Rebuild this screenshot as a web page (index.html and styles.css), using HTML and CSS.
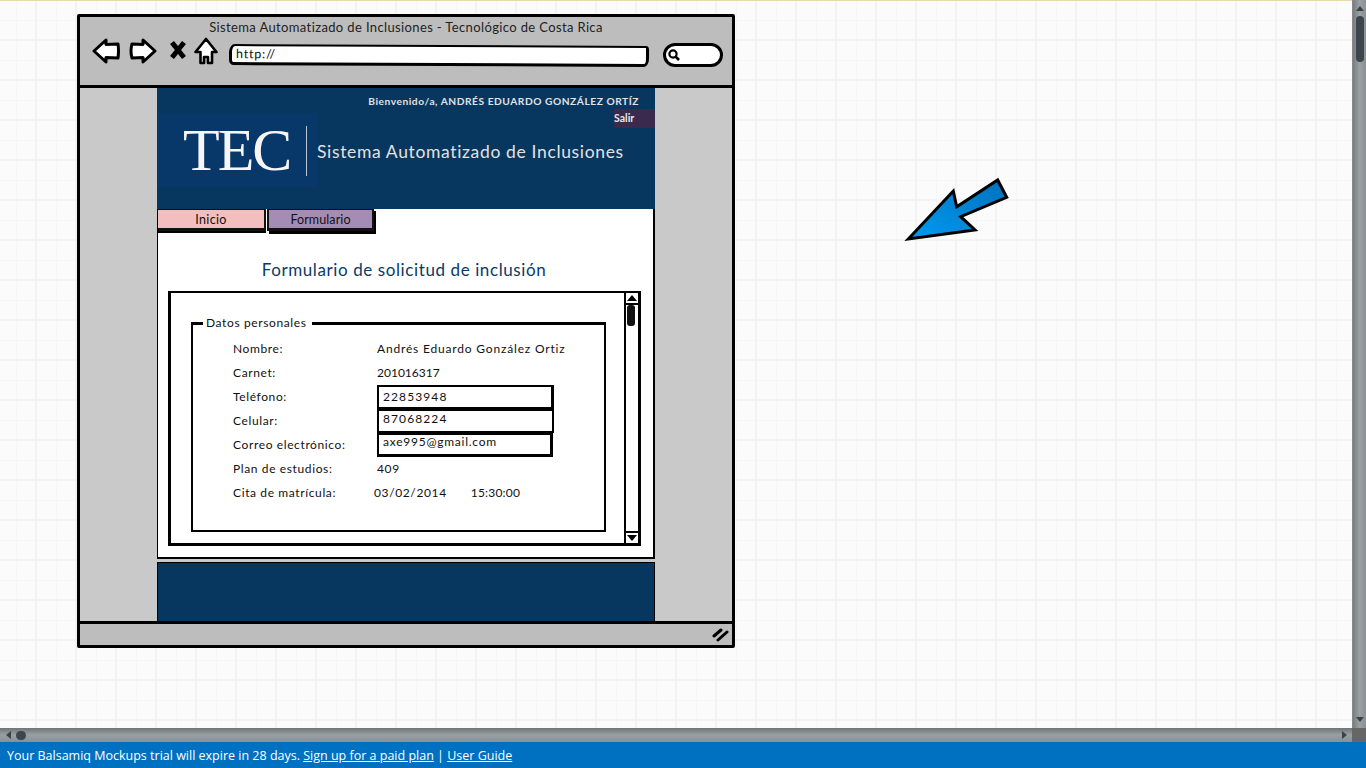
FILE: index.html
```html
<!DOCTYPE html>
<html lang="es">
<head>
<meta charset="utf-8">
<title>Sistema Automatizado de Inclusiones</title>
<link rel="stylesheet" href="styles.css">
</head>
<body>
<div class="app">
  <div class="workspace">
    <main class="canvas">
      <section class="window">
        <header class="chrome">
          <div class="chrome-title">Sistema Automatizado de Inclusiones - Tecnológico de Costa Rica</div>
          <div class="chrome-tools">
            <svg class="tool tool-back" viewBox="0 0 28 26"><path d="M14 2 L2 13 L14 24 L14 19.5 L26 20 Q27 13 26 6 L14 6.5 Z" fill="#fff" stroke="#000" stroke-width="3" stroke-linejoin="round"/></svg>
            <svg class="tool tool-fwd" viewBox="0 0 28 26"><path d="M14 2 L26 13 L14 24 L14 19.5 L3 20 Q1 13 3 6 L14 6.5 Z" fill="#fff" stroke="#000" stroke-width="3" stroke-linejoin="round"/></svg>
            <svg class="tool tool-x" viewBox="0 0 18 20"><path d="M3 2.5 L15 17.5 M15 2.5 L3 17.5" fill="none" stroke="#000" stroke-width="5"/></svg>
            <svg class="tool tool-home" viewBox="0 0 24 28"><path d="M12 2 L22.5 15 L18 15 L18 26 L14 26 L14 20 L10 20 L10 26 L6.5 26 L6.5 15 L1.5 15 Z" fill="#fff" stroke="#000" stroke-width="2.6" stroke-linejoin="round"/></svg>
            <div class="url">http://</div>
            <div class="search"><svg class="search-glass" viewBox="0 0 12 12"><circle cx="5" cy="5" r="3.6" fill="none" stroke="#000" stroke-width="2.2"/><path d="M7.5 7.5 L11 11" stroke="#000" stroke-width="2.6"/></svg></div>
          </div>
        </header>
        <div class="viewport">
          <div class="gutter"></div>
          <div class="site">
            <div class="site-header">
              <div class="welcome">Bienvenido/a, ANDRÉS EDUARDO GONZÁLEZ ORTÍZ</div>
              <div class="logout-row"><span class="logout">Salir</span></div>
              <div class="brand">
                <div class="logo"><span class="logo-text">TEC</span><span class="logo-rule"></span></div>
                <div class="brand-name">Sistema Automatizado de Inclusiones</div>
              </div>
            </div>
            <div class="site-main">
              <nav class="tabs">
                <span class="tab tab-home">Inicio</span>
                <span class="tab tab-form">Formulario</span>
              </nav>
              <h1 class="form-title">Formulario de solicitud de inclusión</h1>
              <div class="scrollbox">
                <div class="scroll-content">
                  <fieldset class="personal">
                    <legend class="personal-legend">Datos personales</legend>
                    <div class="rows">
                      <div class="label">Nombre:</div><div class="value value-name">Andrés Eduardo González Ortiz</div>
                      <div class="label">Carnet:</div><div class="value value-id">201016317</div>
                      <div class="label">Teléfono:</div><div class="input input-a">22853948</div>
                      <div class="label">Celular:</div><div class="input input-b">87068224</div>
                      <div class="label">Correo electrónico:</div><div class="input input-c">axe995@gmail.com</div>
                      <div class="label">Plan de estudios:</div><div class="value">409</div>
                      <div class="label">Cita de matrícula:</div><div class="value value-date"><span>03/02/2014</span><span class="value-time">15:30:00</span></div>
                    </div>
                  </fieldset>
                </div>
                <div class="mini-scroll">
                  <div class="mini-btn"><span class="tri-up"></span></div>
                  <div class="mini-track"><div class="mini-thumb"></div></div>
                  <div class="mini-btn"><span class="tri-down"></span></div>
                </div>
              </div>
            </div>
            <div class="site-footer"></div>
          </div>
          <div class="gutter"></div>
        </div>
        <footer class="status">
          <svg class="grip" viewBox="0 0 18 14"><path d="M2 8 L9 2 M6 12 L15 4" fill="none" stroke="#000" stroke-width="3" stroke-linecap="round"/></svg>
        </footer>
      </section>
      <svg class="pointer" viewBox="0 0 110 70">
        <defs><linearGradient id="pg" x1="0" y1="1" x2="1" y2="0"><stop offset="0" stop-color="#009bf2"/><stop offset="1" stop-color="#0071bb"/></linearGradient></defs>
        <path d="M6.3 62 L51.3 14 L54.7 29.7 L95.7 3 L104.7 20.3 L58.7 39.7 L73 53 Z" fill="url(#pg)" stroke="#000" stroke-width="3" stroke-miterlimit="10"/>
      </svg>
    </main>
    <div class="vbar">
      <span class="sb-tri-up"></span>
      <div class="vthumb"></div>
      <span class="sb-tri-down"></span>
    </div>
    <div class="hbar">
      <span class="sb-tri-left"></span>
      <div class="hthumb"></div>
      <span class="sb-tri-right"></span>
    </div>
    <div class="corner"></div>
  </div>
  <div class="trial">Your Balsamiq Mockups trial will expire in 28 days. <a class="trial-link" href="#">Sign up for a paid plan</a> | <a class="trial-link" href="#">User Guide</a></div>
</div>
</body>
</html>
```
FILE: styles.css
```css
* { box-sizing: border-box; }
html, body { margin: 0; height: 100%; overflow: hidden; }
body { font-family: "Lato", "Liberation Sans", sans-serif; color: #111; }

.app { height: 768px; display: grid; grid-template-rows: 1fr 26px; }
.workspace { display: grid; grid-template-columns: 1fr 14px; grid-template-rows: 1fr 14px; min-height: 0; }

.canvas {
  position: relative;
  overflow: hidden;
  background-color: #fbfbfb;
  border-top: 1px solid #e4dca6;
  background-image:
    linear-gradient(#f3f3f3 2px, transparent 2px),
    linear-gradient(90deg, #f3f3f3 2px, transparent 2px),
    linear-gradient(#f6f6f6 1px, transparent 1px),
    linear-gradient(90deg, #f6f6f6 1px, transparent 1px);
  background-size: 40px 40px, 40px 40px, 20px 20px, 20px 20px;
  background-position: 0 38px, 35px 0, 0 19px, 16px 0;
}

/* Free-canvas items of the mockup */
.window {
  position: absolute;
  left: 77px;
  top: 13px;
  width: 658px;
  height: 634px;
  border: 3px solid #000;
  border-radius: 2px;
  display: grid;
  grid-template-rows: 71px 533px 24px;
  background: #c9c9c9;
}
.pointer { position: absolute; left: 902px; top: 176px; width: 110px; height: 70px; overflow: visible; }

.chrome { background: #bdbdbd; border-bottom: 3px solid #000; display: flex; flex-direction: column; }
.chrome-title { font-size: 13px; letter-spacing: .37px; text-align: center; color: #222; height: 23px; padding-top: 2px; line-height: 16px; }
.chrome-tools { display: flex; align-items: flex-start; padding-left: 12px; }
.tool { display: block; flex: none; }
.tool-back { width: 28px; height: 26px; margin-top: -2px; }
.tool-fwd { width: 28px; height: 26px; margin-left: 9px; margin-top: -2px; }
.tool-x { width: 18px; height: 20px; margin-left: 12px; }
.tool-home { width: 24px; height: 28px; margin-left: 7px; margin-top: -3px; }
.url {
  width: 420px; height: 21px; margin-left: 11px; margin-top: 5px;
  background: #fff; border: solid #000; border-width: 2px 3px 3px 3px; border-radius: 6px 3px 5px 4px / 8px 4px 8px 6px;
  font-size: 12.5px; letter-spacing: .8px; line-height: 15px; padding-left: 4px; color: #111;
  transform: rotate(.25deg);
}
.search {
  width: 60px; height: 24px; margin-left: 14px; margin-top: 3px;
  background: #fff; border: 3px solid #000; border-radius: 12px;
  display: flex; align-items: center; padding-left: 2px;
}
.search-glass { width: 12px; height: 12px; display: block; }

.viewport { display: grid; grid-template-columns: 77px 498px 77px; min-height: 0; }
.gutter { background: #c9c9c9; }
.site { display: grid; grid-template-rows: 121px 350px 62px; }

.site-header { background: #07365f; position: relative; color: #e2e2e2; display: flex; flex-direction: column; }
.welcome { font-size: 10.2px; font-weight: 700; letter-spacing: .54px; text-align: right; padding-right: 16px; height: 21px; line-height: 26px; }
.logout-row { display: flex; justify-content: flex-end; height: 19px; }
.logout { width: 41px; height: 19px; background: #3a2b4e; font-size: 10.5px; font-weight: 700; line-height: 19px; color: #e8e8e8; }
.brand { display: flex; align-items: center; height: 74px; margin-top: -15px; }
.logo { width: 160px; height: 74px; background: #08386a; display: flex; align-items: center; position: relative; padding-left: 26px; }
.logo-text { font-family: "Liberation Serif", serif; font-size: 60px; letter-spacing: -2px; color: #f6f6f6; line-height: 74px; }
.logo-rule { position: absolute; left: 149px; top: 13px; width: 1px; height: 50px; background: #b9c6d4; }
.brand-name { font-size: 17.5px; letter-spacing: .65px; color: #e2e2e2; white-space: nowrap; margin-top: 3px; }

.site-main { background: #fff; border: solid #000; border-width: 0 2px 2px 1px; display: flex; flex-direction: column; }
.tabs { display: flex; gap: 1px; height: 24px; margin-top: -1px; }
.tab {
  width: 107px; height: 23px; text-align: center; font-size: 12.5px; letter-spacing: .35px; line-height: 20px;
  border: 2px solid #111; border-bottom-width: 3px; box-shadow: 0 2px 0 #000; color: #111;
}
.tab-home { background: #f2bebe; width: 108px; border-left: 0; }
.tab-form { background: #a58cb7; box-shadow: 2px 3px 0 #000; letter-spacing: .1px; }
.form-title { margin: 27px 0 0 0; height: 22px; font-size: 17px; font-weight: 400; letter-spacing: .6px; line-height: 22px; text-align: center; color: #0b3a66; padding-right: 3px; }

.scrollbox {
  margin: 10px 12px 0 10px; height: 255px;
  border: 3px solid #000; border-width: 2px 3px 3px 3px; display: grid; grid-template-columns: 1fr 14px;
}
.scroll-content { padding: 23px 18px 0 20px; }
.personal { margin: 0; padding: 0; height: 216px; border: solid #000; border-width: 3px 2px 2px 2px; min-width: 0; }
.personal-legend { margin-left: 10px; padding: 0 5px 0 3px; font-size: 12px; letter-spacing: .62px; line-height: 14px; height: 14px; }
.rows { display: grid; grid-template-columns: 144px 177px; grid-auto-rows: 24px; padding: 7px 0 0 40px; font-size: 12px; letter-spacing: .62px; }
.label, .value { line-height: 24px; white-space: nowrap; }
.value-name { letter-spacing: .82px; }
.value-id { letter-spacing: 0; }
.value-date { display: flex; gap: 24px; margin-left: -3px; }
.value-time { letter-spacing: .2px; }
.input { border: 3px solid #000; background: #fff; padding-left: 4px; height: 24px; }
.input-a { border-width: 2px 3px 2px 2px; line-height: 19px; letter-spacing: 1.1px; }
.input-b { border-width: 2px; line-height: 16px; letter-spacing: 1.1px; }
.input-c { border-width: 2px 3px 3px 2px; width: 176px; line-height: 14px; letter-spacing: .75px; }

.mini-scroll { border-left: 2px solid #000; display: flex; flex-direction: column; }
.mini-btn { height: 10px; display: flex; align-items: center; justify-content: center; background: #fff; }
.tri-up { width: 0; height: 0; border: 5px solid transparent; border-top: 0; border-bottom: 6px solid #000; }
.tri-down { width: 0; height: 0; border: 5px solid transparent; border-bottom: 0; border-top: 6px solid #000; }
.mini-track { flex: 1; border-top: 2px solid #000; border-bottom: 2px solid #000; padding: 0 3px 0 1px; }
.mini-thumb { height: 21px; background: #111; border-radius: 3px; }

.site-footer { background: #07365f; margin-top: 3px; border: solid #000; border-width: 1px 1px 0 1px; }

.status { background: #bdbdbd; border-top: 3px solid #000; display: flex; justify-content: flex-end; align-items: center; padding-right: 2px; }
.grip { width: 18px; height: 14px; display: block; }

/* App scrollbars */
.vbar {
  background: linear-gradient(90deg, #777d80, #9ba0a3 50%, #8a9093);
  display: flex; flex-direction: column; align-items: center; border-left: 1px solid #888;
}
.sb-tri-up { width: 0; height: 0; margin-top: 6px; border: 4px solid transparent; border-top: 0; border-bottom: 5px solid #39424a; }
.vthumb { width: 8px; height: 46px; margin-top: 5px; border-radius: 4px; background: #3d464d; }
.sb-tri-down { width: 0; height: 0; margin-top: auto; margin-bottom: 6px; border: 4px solid transparent; border-bottom: 0; border-top: 5px solid #39424a; }
.hbar {
  background: linear-gradient(#6f7477, #9a9fa2 50%, #8a8f92);
  display: flex; align-items: center; padding: 0 5px 0 6px;
}
.sb-tri-left { width: 0; height: 0; border: 4px solid transparent; border-left: 0; border-right: 5px solid #39424a; }
.hthumb { width: 10px; height: 9px; margin-left: 5px; border-radius: 5px; background: #3d464d; }
.sb-tri-right { width: 0; height: 0; margin-left: auto; border: 4px solid transparent; border-right: 0; border-left: 5px solid #39424a; }
.corner { background: #666; }

.trial {
  background: #0070c0; color: #fff; font-family: "Open Sans", sans-serif; font-size: 12.5px; line-height: 26px;
  padding: 1px 0 0 7px; white-space: nowrap;
}
.trial-link { color: #fff; text-decoration: underline; }
```
